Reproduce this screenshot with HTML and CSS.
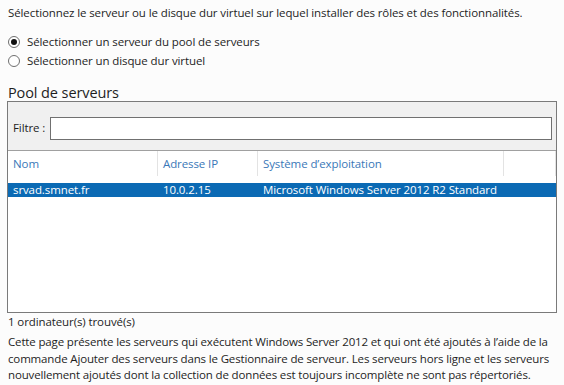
FILE: index.html
```html
<!DOCTYPE html>
<html lang="fr">
<head>
<meta charset="utf-8">
<link rel="stylesheet" href="styles.css">
</head>
<body>
<div class="page">
  <p class="intro">Sélectionnez le serveur ou le disque dur virtuel sur lequel installer des rôles et des fonctionnalités.</p>
  <div class="radios">
    <label class="radio"><span class="dot checked"></span>Sélectionner un serveur du pool de serveurs</label>
    <label class="radio"><span class="dot"></span>Sélectionner un disque dur virtuel</label>
  </div>
  <h2 class="heading">Pool de serveurs</h2>
  <div class="panel">
    <div class="toolbar">
      <span class="flabel">Filtre :</span>
      <div class="finput"></div>
    </div>
    <div class="grid">
      <div class="hrow">
        <div class="c1">Nom</div>
        <div class="c2">Adresse IP</div>
        <div class="c3">Système d’exploitation</div>
        <div class="c4"></div>
      </div>
      <div class="row selected">
        <div class="c1">srvad.smnet.fr</div>
        <div class="c2">10.0.2.15</div>
        <div class="c3">Microsoft Windows Server 2012 R2 Standard</div>
        <div class="c4"></div>
      </div>
    </div>
  </div>
  <p class="count">1 ordinateur(s) trouvé(s)</p>
  <p class="note">Cette page présente les serveurs qui exécutent Windows Server 2012 et qui ont été ajoutés à l’aide de la<br>commande Ajouter des serveurs dans le Gestionnaire de serveur. Les serveurs hors ligne et les serveurs<br>nouvellement ajoutés dont la collection de données est toujours incomplète ne sont pas répertoriés.</p>
</div>
</body>
</html>
```
FILE: styles.css
```css
html, body {
  margin: 0;
  padding: 0;
  background: #fcfcfc;
}
.page {
  font-family: "Open Sans", "Noto Sans", sans-serif;
  font-size: 11.5px;
  letter-spacing: -0.1px;
  color: #1e1e1e;
  padding: 5px 0 0 7px;
  width: 550px;
}
p { margin: 0; }
.intro {
  padding-left: 1px;
  line-height: 16px;
}
.radios {
  margin-top: 13px;
  display: flex;
  flex-direction: column;
  gap: 3px;
}
.radio {
  display: flex;
  align-items: center;
  height: 16px;
  line-height: 16px;
  padding-left: 1px;
}
.dot {
  width: 12px;
  height: 12px;
  border: 1px solid #6f6f6f;
  border-radius: 50%;
  box-sizing: border-box;
  margin-right: 7px;
  background: #fff;
  position: relative;
}
.dot.checked::after {
  content: "";
  position: absolute;
  left: 2px;
  top: 2px;
  width: 6px;
  height: 6px;
  border-radius: 50%;
  background: #111;
}
.heading {
  margin: 12px 0 0 1px;
  font-weight: normal;
  font-size: 14.5px;
  line-height: 24px;
  height: 20px;
  color: #1e1e1e;
}
.panel {
  border: 1px solid #7a7a7a;
  height: 210px;
  background: #fff;
  display: flex;
  flex-direction: column;
}
.toolbar {
  height: 49px;
  flex: none;
  box-sizing: border-box;
  padding: 1px 4px 0 5px;
  background: #f0f0f0;
  border-bottom: 1px solid #a0a0a0;
  display: flex;
  align-items: center;
  gap: 5px;
}
.flabel {
  line-height: 16px;
  margin-top: 2px;
}
.finput {
  flex: 1;
  height: 23px;
  box-sizing: border-box;
  border: 1px solid #707070;
  background: #fff;
  margin-top: 4px;
}
.grid {
  flex: 1;
}
.hrow, .row {
  display: grid;
  grid-template-columns: 150px 100px 246px 52px;
}
.hrow {
  height: 25px;
  color: #3a78b8;
}
.hrow > div {
  border-right: 1px solid #e3e3e3;
  padding-left: 5px;
  line-height: 25px;
}
.row {
  margin-top: 7px;
  height: 14px;
  line-height: 14px;
}
.row > div {
  padding-left: 5px;
  white-space: nowrap;
}
.row.selected {
  background: #0b6ab4;
  color: #fff;
}
.count {
  margin-top: 0;
  padding-left: 1px;
  line-height: 17px;
}
.note {
  margin-top: 4px;
  padding-left: 1px;
  line-height: 16.5px;
  letter-spacing: -0.15px;
  white-space: nowrap;
}
```
